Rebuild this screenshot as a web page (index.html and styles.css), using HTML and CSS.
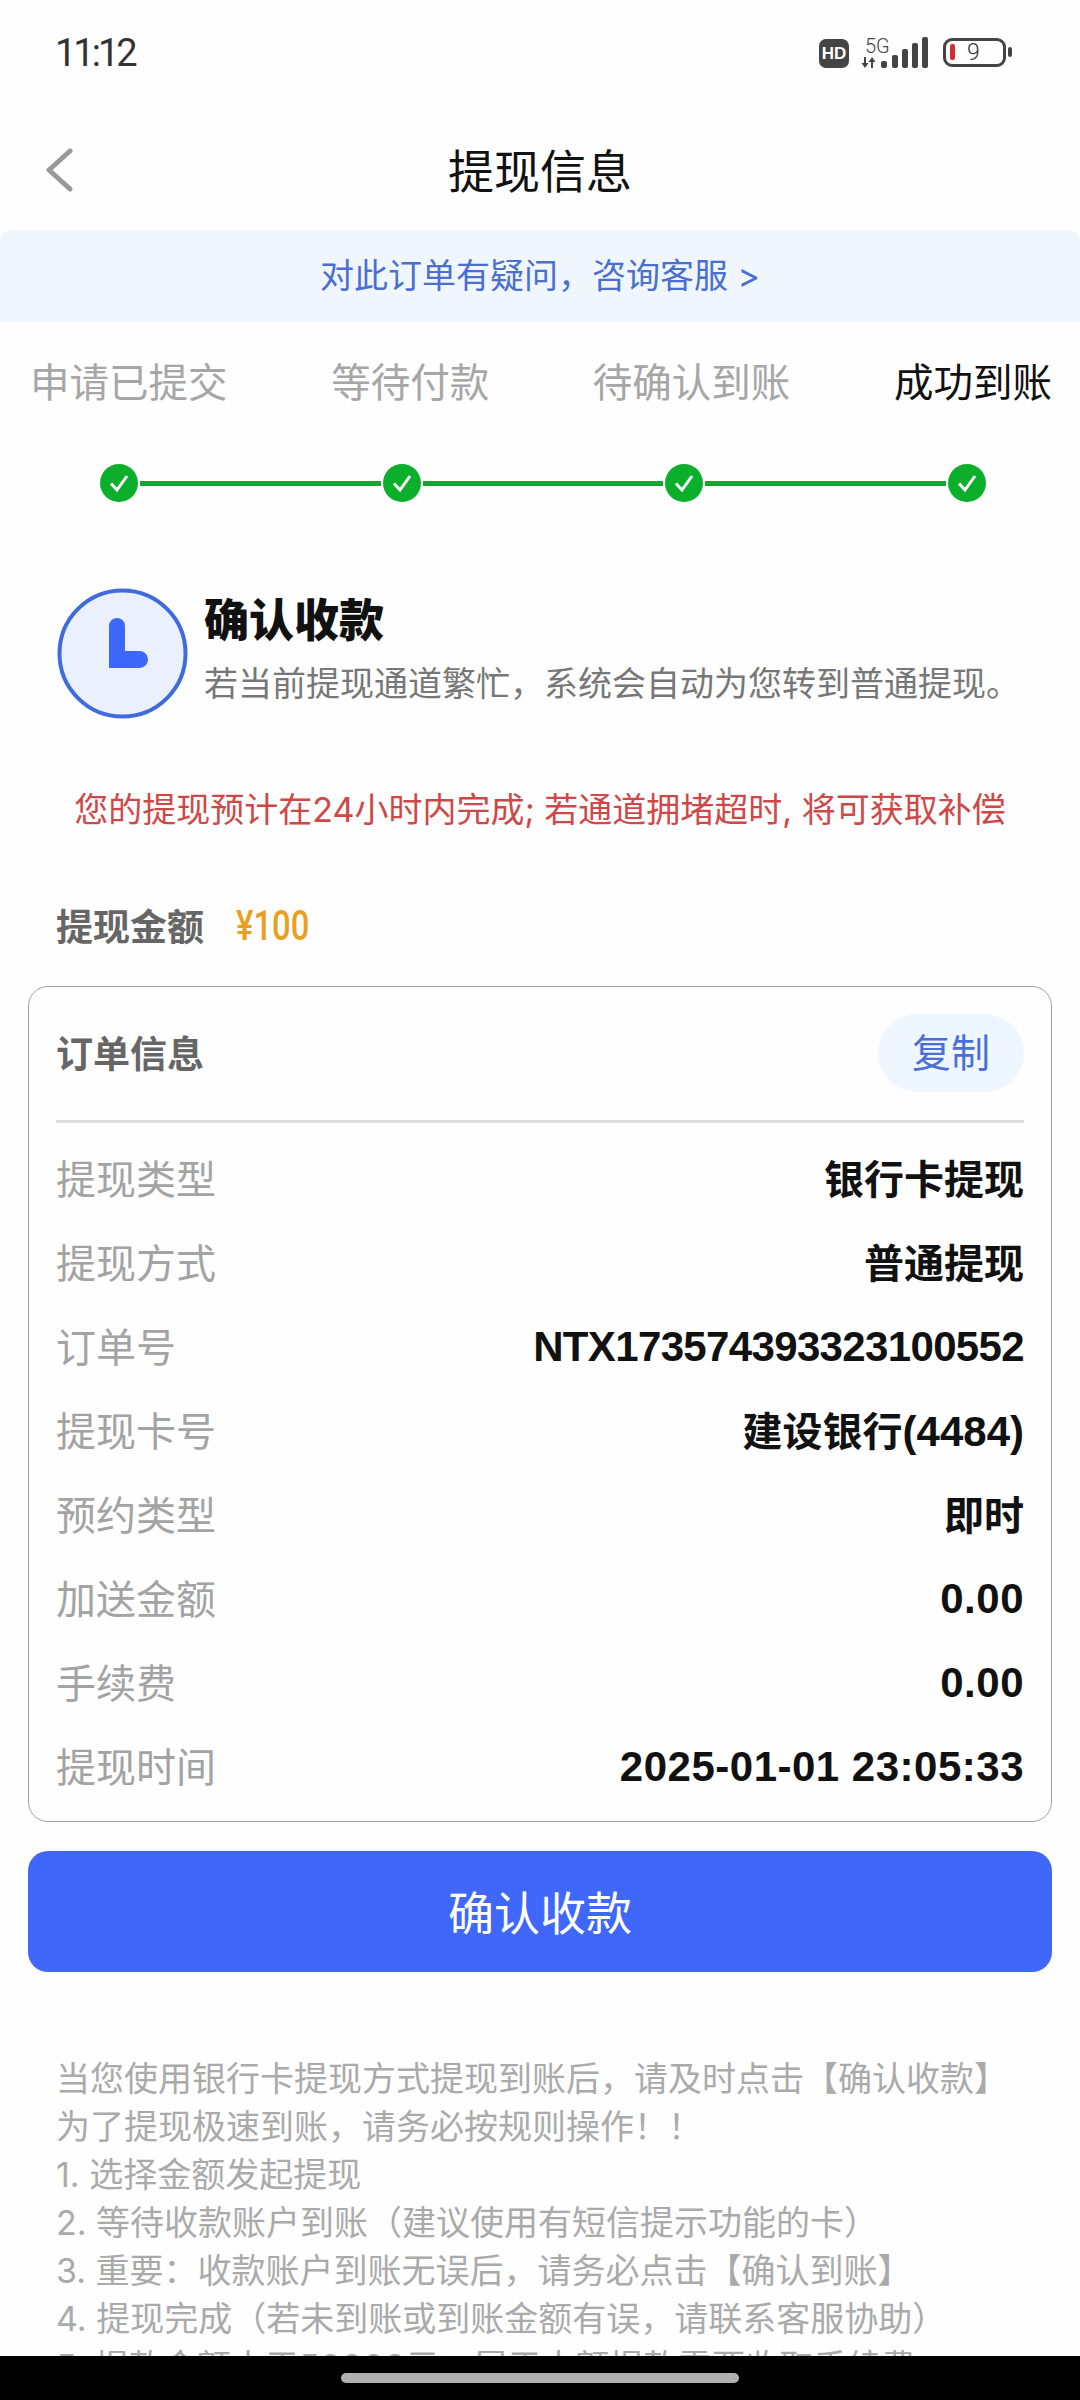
FILE: index.html
```html
<!DOCTYPE html>
<html lang="zh-CN">

<head>
    <meta charset="UTF-8">
    <meta name="viewport" content="width=device-width, initial-scale=1.0">
    <title>提现信息</title>
    <link rel="stylesheet" href="styles.css">
</head>

<body>
    <div class="page">
        <div class="status-bar">
            <span class="status-time">11:12</span>
            <div class="status-icons">
                <span class="hd-badge">HD</span>
                <div class="signal">
                    <span class="signal-label">5G</span>
                    <svg class="signal-arrows" width="17" height="11" viewBox="0 0 17 11">
                        <path d="M5 0v6h2.500L4 11 .5 6H3V0z" fill="#444" />
                        <path d="M10 11V5H7.500L11 0l3.500 5H12v6z" fill="#444" />
                    </svg>
                </div>
                <svg class="signal-bars" width="48" height="31" viewBox="0 0 48 31">
                    <rect x="0" y="24" width="6" height="7" rx="2" fill="#444" />
                    <rect x="11" y="18" width="6" height="13" rx="2" fill="#444" />
                    <rect x="21" y="12" width="6" height="19" rx="2" fill="#444" />
                    <rect x="31" y="6" width="6" height="25" rx="2" fill="#444" />
                    <rect x="41" y="0" width="6" height="31" rx="2" fill="#444" />
                </svg>
                <div class="battery">
                    <div class="battery-body">
                        <span class="battery-level"></span>
                        <span class="battery-num">9</span>
                    </div>
                    <span class="battery-nub"></span>
                </div>
            </div>
        </div>

        <div class="nav">
            <svg class="nav-back" width="30" height="44" viewBox="0 0 30 44">
                <path d="M26 3 5 22l21 19" fill="none" stroke="#999" stroke-width="5" stroke-linecap="round" stroke-linejoin="round" />
            </svg>
            <h1 class="nav-title">提现信息</h1>
        </div>

        <div class="help-banner">对此订单有疑问&#xFF0C;咨询客服 &gt;</div>

        <div class="step-labels">
            <span>申请已提交</span>
            <span>等待付款</span>
            <span>待确认到账</span>
            <span class="step-current">成功到账</span>
        </div>

        <div class="step-track">
            <svg class="step-dot" width="38" height="38" viewBox="0 0 38 38">
                <circle cx="19" cy="19" r="19" fill="#0caf2c" />
                <path d="M11 19.500 17 26 27 12" fill="none" stroke="#fff" stroke-width="3" />
            </svg>
            <span class="step-line"></span>
            <svg class="step-dot" width="38" height="38" viewBox="0 0 38 38">
                <circle cx="19" cy="19" r="19" fill="#0caf2c" />
                <path d="M11 19.500 17 26 27 12" fill="none" stroke="#fff" stroke-width="3" />
            </svg>
            <span class="step-line"></span>
            <svg class="step-dot" width="38" height="38" viewBox="0 0 38 38">
                <circle cx="19" cy="19" r="19" fill="#0caf2c" />
                <path d="M11 19.500 17 26 27 12" fill="none" stroke="#fff" stroke-width="3" />
            </svg>
            <span class="step-line"></span>
            <svg class="step-dot" width="38" height="38" viewBox="0 0 38 38">
                <circle cx="19" cy="19" r="19" fill="#0caf2c" />
                <path d="M11 19.500 17 26 27 12" fill="none" stroke="#fff" stroke-width="3" />
            </svg>
        </div>

        <div class="state">
            <svg class="state-icon" width="131" height="131" viewBox="0 0 131 131">
                <circle cx="65.500" cy="65.500" r="63" fill="#ebf0fe" stroke="#3f6bdc" stroke-width="4" />
                <path d="M52 38a8 8 0 0 1 16 0v25h14.500a8.500 8.500 0 0 1 0 17H52z" fill="#3d68fb" />
            </svg>
            <div class="state-text">
                <div class="state-title">确认收款</div>
                <div class="state-desc">若当前提现通道繁忙&#xFF0C;系统会自动为您转到普通提现&#x3002;</div>
            </div>
        </div>

        <p class="notice">您的提现预计在24小时内完成; 若通道拥堵超时, 将可获取补偿</p>

        <div class="amount">
            <span class="amount-label">提现金额</span>
            <span class="amount-value">¥100</span>
        </div>

        <div class="card">
            <div class="card-head">
                <span class="card-title">订单信息</span>
                <span class="copy-btn">复制</span>
            </div>
            <div class="row"><span class="row-label">提现类型</span><span class="row-value">银行卡提现</span></div>
            <div class="row"><span class="row-label">提现方式</span><span class="row-value">普通提现</span></div>
            <div class="row"><span class="row-label">订单号</span><span class="row-value row-num row-order">NTX173574393323100552</span></div>
            <div class="row"><span class="row-label">提现卡号</span><span class="row-value">建设银行<span class="row-num row-card">(4484)</span></span></div>
            <div class="row"><span class="row-label">预约类型</span><span class="row-value">即时</span></div>
            <div class="row"><span class="row-label">加送金额</span><span class="row-value row-num">0.00</span></div>
            <div class="row"><span class="row-label">手续费</span><span class="row-value row-num">0.00</span></div>
            <div class="row"><span class="row-label">提现时间</span><span class="row-value row-num">2025-01-01 23:05:33</span></div>
        </div>

        <button class="confirm-btn">确认收款</button>

        <div class="rules">
            <div>当您使用银行卡提现方式提现到账后&#xFF0C;请及时点击&#x3010;确认收款&#x3011;</div>
            <div>为了提现极速到账&#xFF0C;请务必按规则操作&#xFF01;&#xFF01;</div>
            <div>1. 选择金额发起提现</div>
            <div>2. 等待收款账户到账&#xFF08;建议使用有短信提示功能的卡&#xFF09;</div>
            <div>3. 重要&#xFF1A;收款账户到账无误后&#xFF0C;请务必点击&#x3010;确认到账&#x3011;</div>
            <div>4. 提现完成&#xFF08;若未到账或到账金额有误&#xFF0C;请联系客服协助&#xFF09;</div>
            <div>5. 提款金额大于50000元&#xFF0C;属于大额提款需要收取手续费</div>
        </div>

        <div class="home-bar"><span class="home-pill"></span></div>
    </div>
</body>

</html>
```

FILE: styles.css
```css
* {
    box-sizing: border-box;
}

body {
    margin: 0;
    background-color: #fefefe;
    font-family: "Inter", "Noto Sans CJK SC", sans-serif;
}

.page {
    position: relative;
    width: 1080px;
    height: 2400px;
    overflow: hidden;
    background-color: #fefefe;
}

/* status bar */
.status-bar {
    display: flex;
    justify-content: space-between;
    align-items: center;
    height: 104px;
    padding: 0 68px 0 55px;
}

.status-time {
    padding-top: 1px;
    font-family: "Roboto", sans-serif;
    font-size: 38px;
    letter-spacing: -3px;
    color: #333;
}

.status-icons {
    display: flex;
    align-items: flex-end;
    height: 31px;
}

.hd-badge {
    width: 30px;
    height: 29px;
    margin-right: 12px;
    border-radius: 7px;
    background-color: #444;
    color: #fff;
    font-family: "Liberation Sans", sans-serif;
    font-size: 17px;
    font-weight: 700;
    line-height: 29px;
    text-align: center;
}

.signal {
    display: flex;
    flex-direction: column;
    width: 20px;
    height: 31px;
}

.signal-label {
    margin-left: 4px;
    font-family: "Roboto", sans-serif;
    font-size: 20px;
    font-weight: 300;
    line-height: 18px;
    color: #444;
    white-space: nowrap;
}

.signal-arrows {
    margin-top: 2px;
}

.battery {
    display: flex;
    align-items: center;
    margin-left: 14px;
    margin-bottom: 1px;
}

.battery-body {
    display: flex;
    align-items: center;
    width: 63px;
    height: 29px;
    padding-left: 4px;
    border: 3px solid #444;
    border-radius: 9px;
}

.battery-level {
    width: 5px;
    height: 16px;
    border-radius: 2px;
    background-color: #d32f2f;
}

.battery-num {
    margin-left: 12px;
    font-family: "Roboto", sans-serif;
    font-size: 23px;
    font-weight: 300;
    line-height: 23px;
    color: #333;
}

.battery-nub {
    width: 4px;
    height: 10px;
    margin-left: 2px;
    border-radius: 2px;
    background-color: #444;
}

/* title bar */
.nav {
    position: relative;
    height: 126px;
    padding-top: 33px;
}

.nav-back {
    position: absolute;
    left: 44px;
    top: 44px;
}

.nav-title {
    margin: 0;
    font-size: 46px;
    font-weight: 400;
    line-height: 68px;
    text-align: center;
    color: #111;
}

.help-banner {
    height: 92px;
    border-radius: 12px 12px 0 0;
    background-color: #eff6fe;
    font-size: 34px;
    line-height: 92px;
    text-align: center;
    color: #4a6fd0;
}

/* steps */
.step-labels {
    display: flex;
    justify-content: space-between;
    height: 122px;
    padding: 0 28px 0 30px;
    font-size: 39.500px;
    line-height: 122px;
    color: #a6a6a6;
}

.step-current {
    color: #111;
}

.step-track {
    display: flex;
    align-items: center;
    margin-top: 20px;
    padding: 0 94px 0 100px;
}

.step-dot {
    flex-shrink: 0;
}

.step-line {
    flex: 1;
    height: 5px;
    margin: 0 2px;
    background-color: #17a532;
}

/* current state */
.state {
    display: flex;
    gap: 16px;
    margin-top: 86px;
    padding-left: 57px;
}

.state-icon {
    flex-shrink: 0;
}

.state-title {
    padding-top: 1px;
    font-size: 45px;
    font-weight: 900;
    line-height: 64px;
    color: #111;
}

.state-desc {
    font-size: 34px;
    line-height: 61px;
    white-space: nowrap;
    color: #777;
}

.notice {
    margin: 66px 0 0;
    font-size: 34px;
    line-height: 50px;
    text-align: center;
    color: #cf4848;
}

.amount {
    display: flex;
    align-items: center;
    gap: 32px;
    height: 60px;
    margin-top: 60px;
    padding-left: 56px;
}

.amount-label {
    font-size: 37px;
    font-weight: 700;
    color: #666;
}

.amount-value {
    font-family: "Roboto", sans-serif;
    font-size: 42px;
    font-weight: 500;
    color: #e8a020;
    transform: scaleX(0.78);
    transform-origin: left center;
}

/* order card */
.card {
    height: 836px;
    margin: 31px 28px 0;
    padding: 27px 27px 0;
    border: 1px solid #a3a3a3;
    border-radius: 20px;
}

.card-head {
    display: flex;
    justify-content: space-between;
    align-items: center;
    height: 109px;
    padding-bottom: 28px;
    border-bottom: 3px solid #dddde0;
}

.card-title {
    margin-top: -3px;
    font-size: 37px;
    font-weight: 700;
    color: #666;
}

.copy-btn {
    width: 146px;
    height: 78px;
    border-radius: 39px;
    background-color: #eef6ff;
    font-size: 39px;
    line-height: 78px;
    text-align: center;
    color: #4a6fd8;
}

.card-head + .row {
    margin-top: 12px;
}

.row {
    display: flex;
    justify-content: space-between;
    align-items: center;
    height: 84px;
}

.row-label {
    font-size: 40px;
    color: #a3a3a3;
}

.row-value {
    font-size: 40px;
    font-weight: 700;
    color: #111;
}

.row-num {
    padding-top: 3px;
    font-family: "Liberation Sans", sans-serif;
    font-size: 42px;
    letter-spacing: 0.5px;
}

.row-order {
    letter-spacing: -0.650px;
}

.row-card {
    letter-spacing: 0;
}

.confirm-btn {
    display: block;
    width: 1024px;
    height: 121px;
    margin: 29px 28px 0;
    padding: 0 0 3px;
    border: none;
    border-radius: 20px;
    background-color: #3f68fb;
    color: #fff;
    font-family: inherit;
    font-size: 46px;
}

.rules {
    margin-top: 83px;
    padding-left: 56px;
    font-size: 34px;
    line-height: 48px;
    color: #aaa;
}

/* system gesture bar */
.home-bar {
    position: absolute;
    left: 0;
    right: 0;
    bottom: 0;
    display: flex;
    justify-content: center;
    height: 44px;
    padding-top: 17px;
    background-color: #000;
}

.home-pill {
    width: 398px;
    height: 10px;
    border-radius: 5px;
    background-color: #b0b0b0;
}
```
